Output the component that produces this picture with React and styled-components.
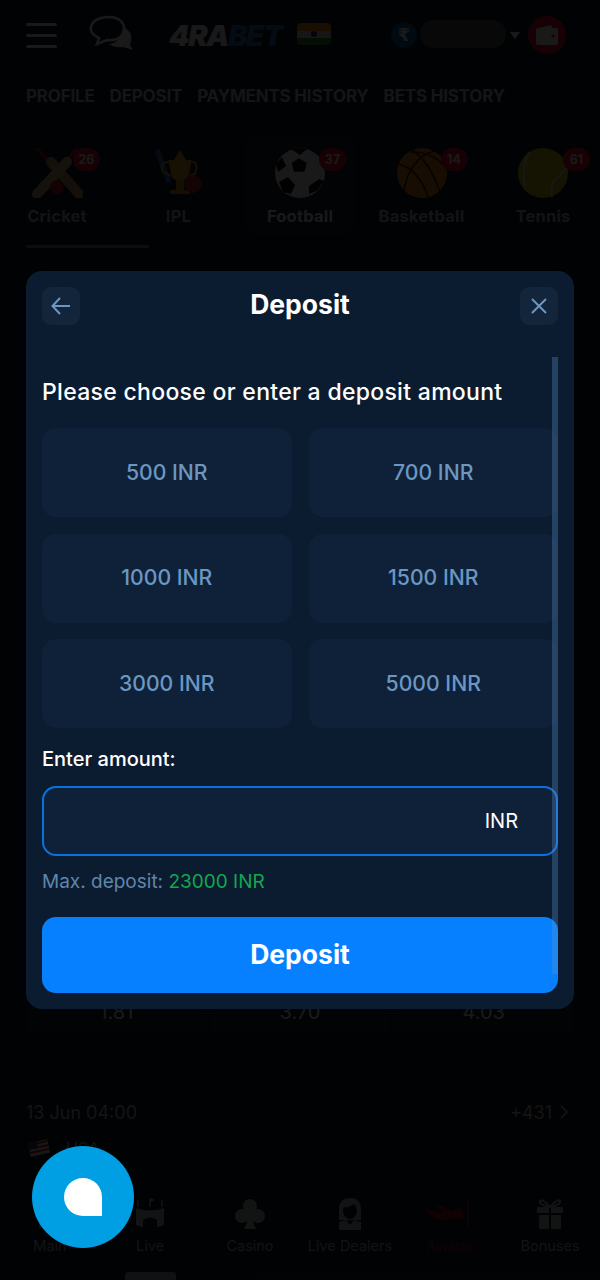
import React from "react";
import styled, { createGlobalStyle } from "styled-components";

const Global = createGlobalStyle`
  html, body { margin: 0; padding: 0; background: #000; }
  * { box-sizing: border-box; }
  body { font-family: Inter, "Noto Sans", sans-serif; }
`;

const Page = styled.div`
  position: relative;
  width: 600px;
  height: 1280px;
  overflow: hidden;
  background: #0a1a2c;
  color: #fff;
`;

/* ---------- background page ---------- */
const Header = styled.header`
  display: flex;
  align-items: center;
  height: 70px;
  padding: 0 32px 0 26px;
`;
const Burger = styled.div`
  display: flex;
  flex-direction: column;
  gap: 8px;
  width: 31px;
  span { height: 3px; background: #fff; border-radius: 2px; }
`;
const ChatGlyph = styled.svg`
  width: 44px;
  height: 36px;
  margin-left: 32px;
  margin-top: -4px;
`;
const Logo = styled.div`
  margin-left: 36px;
  font-size: 29px;
  font-weight: 900;
  font-style: italic;
  letter-spacing: -1.2px;
  width: 128px;
  white-space: nowrap;
`;
const LogoAccent = styled.span`
  color: #2a6fc0;
`;
const Flag = styled.svg`
  width: 34px;
  height: 22px;
  margin-top: -2px;
`;
const Rupee = styled.div`
  display: flex;
  align-items: center;
  justify-content: center;
  width: 26px;
  height: 26px;
  margin-left: 60px;
  margin-top: -1px;
  border-radius: 50%;
  background: #0a5cb0;
  font: 700 18px "DejaVu Sans", sans-serif;
`;
const Balance = styled.div`
  width: 86px;
  height: 28px;
  margin-left: 3px;
  margin-top: -3px;
  border-radius: 14px;
  background: #465046;
`;
const Caret = styled.div`
  width: 0;
  height: 0;
  margin-left: 4px;
  border-left: 5px solid transparent;
  border-right: 5px solid transparent;
  border-top: 7px solid #fff;
`;
const WalletCircle = styled.div`
  display: flex;
  align-items: center;
  justify-content: center;
  width: 38px;
  height: 38px;
  margin-left: 8px;
  border-radius: 50%;
  background: #e8112d;
`;
const Tabs = styled.nav`
  display: flex;
  gap: 15px;
  height: 52px;
  padding: 16px 26px 0;
  font-size: 17px;
  font-weight: 700;
  letter-spacing: -0.2px;
  color: #bcd4ec;
  white-space: nowrap;
`;
const Sports = styled.div`
  display: flex;
  gap: 9.5px;
  padding: 13px 0 0 1px;
  white-space: nowrap;
`;
const Sport = styled.div`
  flex: 0 0 112px;
  display: flex;
  flex-direction: column;
  align-items: center;
  height: 100px;
  padding-top: 13px;
  border-radius: 14px;
  background: ${(p) => (p.$active ? "#101f33" : "transparent")};
  font-size: 16.5px;
  font-weight: 700;
  letter-spacing: 0.2px;
  color: ${(p) => (p.$active ? "#fff" : "#b4c2d2")};
`;
const SportIcon = styled.div`
  position: relative;
  width: 52px;
  height: 50px;
  margin-bottom: 8px;
  svg { display: block; width: 52px; height: 50px; }
`;
const Badge = styled.span`
  position: absolute;
  top: 0;
  left: ${(p) => p.$left}px;
  display: flex;
  align-items: center;
  justify-content: center;
  width: 27px;
  height: 23px;
  border-radius: 12px;
  background: #e8112d;
  font-size: 12.5px;
  font-weight: 700;
  letter-spacing: 0;
  color: #fff;
`;
const ScrollTrack = styled.div`
  width: 123px;
  height: 3px;
  margin: 10px 0 0 26px;
  border-radius: 2px;
  background: #7a8694;
`;
const Match = styled.section`
  display: flex;
  align-items: flex-end;
  height: 786px;
  padding: 0 26px;
`;
const Odds = styled.div`
  display: grid;
  grid-template-columns: repeat(3, 1fr);
  gap: 3px;
  width: 100%;
`;
const Odd = styled.div`
  height: 44px;
  padding-top: 10px;
  border-radius: 6px;
  background: #0f2033;
  text-align: center;
  font-size: 20px;
  color: #fff;
`;
const DateRow = styled.div`
  display: flex;
  align-items: center;
  justify-content: space-between;
  height: 26px;
  margin-top: 65px;
  padding: 0 32px 0 26px;
  font-size: 18px;
  color: #c8c8c8;
`;
const More = styled.span`
  display: flex;
  align-items: center;
  gap: 8px;
`;
const League = styled.div`
  display: flex;
  align-items: center;
  gap: 17px;
  margin-top: 13px;
  padding-left: 29px;
  font-size: 16px;
  color: #c8c8c8;
`;
const LeagueFlag = styled.svg`
  width: 20px;
  height: 14px;
  transform: rotate(-12deg);
`;
const BottomNav = styled.nav`
  position: absolute;
  left: 0;
  right: 0;
  bottom: 0;
  display: grid;
  grid-template-columns: repeat(6, 1fr);
  height: 90px;
  padding-top: 8px;
  background: #0a1a2c;
`;
const NavItem = styled.div`
  position: relative;
  display: flex;
  flex-direction: column;
  align-items: center;
  font-size: 14.5px;
  white-space: nowrap;
  color: ${(p) => (p.$red ? "#b00e24" : "#b4bcc4")};
  svg { display: block; width: 40px; height: 32px; margin-bottom: 7px; overflow: visible; }
`;
const NavMarker = styled.span`
  position: absolute;
  bottom: 0;
  left: 25px;
  width: 51px;
  height: 8px;
  border-radius: 4px 4px 0 0;
  background: #aaa;
`;

/* ---------- dim layer and modal ---------- */
const Dim = styled.div`
  position: absolute;
  inset: 0;
  display: flex;
  align-items: center;
  justify-content: center;
  background: rgba(0, 0, 0, 0.9);
`;
const Modal = styled.div`
  display: flex;
  flex-direction: column;
  width: 548px;
  padding: 16px;
  border-radius: 16px;
  background: #0c1c30;
`;
const ModalHead = styled.div`
  display: flex;
  align-items: center;
  justify-content: space-between;
  height: 38px;
`;
const ModalTitle = styled.h1`
  margin: 0 0 5px;
  font-size: 26.5px;
  font-weight: 700;
`;
const IconButton = styled.button`
  display: flex;
  align-items: center;
  justify-content: center;
  width: 38px;
  height: 38px;
  padding: 0;
  border: 0;
  border-radius: 9px;
  background: #12253b;
`;
const ModalBody = styled.div`
  position: relative;
  margin-top: 32px;
  padding-top: 19px;
`;
const Scrollbar = styled.div`
  position: absolute;
  top: 0;
  right: 0;
  width: 6px;
  height: 617px;
  background: rgba(94, 146, 204, 0.32);
`;
const Heading = styled.h2`
  margin: 0 0 20px;
  font-size: 23px;
  line-height: 32px;
  font-weight: 500;
  letter-spacing: 0.3px;
  white-space: nowrap;
`;
const Amounts = styled.div`
  display: grid;
  grid-template-columns: 1fr 1fr;
  grid-auto-rows: 89px;
  gap: 16.5px 17px;
`;
const Amount = styled.button`
  border: 0;
  padding: 0 0 2px;
  border-radius: 14px;
  background: #0f2139;
  font: 500 21.2px Inter, sans-serif;
  color: #6b97c2;
`;
const Label = styled.div`
  margin-top: 19px;
  font-size: 20px;
  line-height: 24px;
  font-weight: 500;
`;
const Field = styled.div`
  display: flex;
  align-items: center;
  height: 70px;
  margin-top: 15px;
  padding: 0 38px 0 16px;
  border: 2px solid #0a72de;
  border-radius: 14px;
  background: #0f2139;
  font-size: 20px;
`;
const FieldInput = styled.input`
  flex: 1;
  min-width: 0;
  border: 0;
  outline: 0;
  background: transparent;
  color: #fff;
`;
const Limit = styled.div`
  margin-top: 14px;
  font-size: 19px;
  line-height: 24px;
  color: #5f86ad;
`;
const LimitValue = styled.span`
  color: #12a84f;
`;
const Submit = styled.button`
  display: block;
  width: 100%;
  height: 76px;
  margin-top: 23px;
  padding: 0 0 2px;
  border: 0;
  border-radius: 14px;
  background: #0780ff;
  font: 700 26.5px Inter, sans-serif;
  color: #fff;
`;
const ChatWidget = styled.div`
  position: absolute;
  left: 32px;
  top: 1146px;
  display: flex;
  align-items: center;
  justify-content: center;
  width: 102px;
  height: 102px;
  border-radius: 50%;
  background: #009fe3;
`;
const ChatBubble = styled.div`
  width: 38px;
  height: 38px;
  border-radius: 50% 50% 0 50%;
  background: #fff;
`;

/* ---------- drawings ---------- */
const Cricket = () => (
  <svg viewBox="0 0 52 50">
    <g strokeLinecap="round">
      <path d="M6 0 L20 16" stroke="#b81c22" strokeWidth="3" />
      <path d="M20 14 L48 46" stroke="#c89c60" strokeWidth="10" />
      <path d="M46 0 L34 14" stroke="#b81c22" strokeWidth="3" />
      <path d="M36 14 L6 46" stroke="#d8b478" strokeWidth="10" />
    </g>
    <circle cx="26" cy="39" r="7" fill="#b81c22" />
  </svg>
);
const Ipl = () => (
  <svg viewBox="0 0 52 50">
    <path d="M4 2 L16 34" stroke="#2b6fd0" strokeWidth="5" />
    <path d="M15 12 H39 L35 30 Q27 36 19 30Z" fill="#e8ab2c" />
    <path d="M15 14 Q6 14 10 24 L18 28M39 14 Q46 14 42 26 L36 28" fill="none" stroke="#d9a02c" strokeWidth="2" />
    <path d="M27 2 L33 12 H21Z" fill="#e8ab2c" />
    <path d="M23 32 H31 V42 H37 V46 H17 V42 H23Z" fill="#d6981f" />
    <circle cx="40" cy="36" r="9" fill="#c9242c" />
  </svg>
);
const Football = () => (
  <svg viewBox="0 0 52 50">
    <circle cx="26" cy="25" r="25" fill="#fff" />
    <path d="M26 14 L36 20 L33 31 L20 31 L17 20Z" fill="#111" transform="translate(4 -1) scale(.8)" />
    <path d="M5 34 L14 29 L21 37 L17 46 L9 44Z" fill="#111" />
    <path d="M45 31 L50 33 L43 43 L35 46 L35 38Z" fill="#111" />
    <path d="M17 1 L26 0 L33 1 L26 7Z" fill="#111" />
    <path d="M2 16 L8 9 L12 18 L4 24Z" fill="#111" />
  </svg>
);
const Basketball = () => (
  <svg viewBox="0 0 52 50">
    <circle cx="26" cy="25" r="25" fill="#e8871e" />
    <g fill="none" stroke="#3a2208" strokeWidth="1.6">
      <path d="M16 2 Q34 14 44 44" />
      <path d="M2 16 Q22 20 32 49" />
      <path d="M38 3 Q14 10 8 42" />
      <path d="M14 4 Q40 4 51 22" />
    </g>
  </svg>
);
const Tennis = () => (
  <svg viewBox="0 0 52 50">
    <circle cx="26" cy="25" r="25" fill="#cfcb18" />
    <g fill="none" stroke="#e8e8d0" strokeWidth="2">
      <path d="M12 4 Q4 20 8 38" />
      <path d="M50 20 Q44 26 36 34 Q34 40 35 49" />
    </g>
  </svg>
);
const sports = [
  { name: "Cricket", count: 26, Icon: Cricket, badge: 42 },
  { name: "IPL", Icon: Ipl },
  { name: "Football", count: 37, Icon: Football, badge: 45, active: true },
  { name: "Basketball", count: 14, Icon: Basketball, badge: 45 },
  { name: "Tennis", count: 61, Icon: Tennis, badge: 46 },
];

const Home = () => (
  <svg viewBox="0 0 40 32"><path d="M20 2 L36 16 H31 V30 H9 V16 H4Z" fill="currentColor" /></svg>
);
const Stadium = () => (
  <svg viewBox="0 0 40 32" fill="currentColor">
    <path d="M6 10 Q20 15 34 10 V27 Q31 29 27 29 V22 Q20 17 13 22 V29 Q9 29 6 27Z" />
    <path d="M8 2 V9M20 0 V9M32 2 V9" stroke="currentColor" strokeWidth="1.5" />
    <path d="M20 0 L25 2 L20 4Z" />
  </svg>
);
const ClubSuit = () => (
  <svg viewBox="0 0 40 32" fill="currentColor">
    <circle cx="20" cy="8" r="7" />
    <circle cx="12" cy="18" r="7" />
    <circle cx="28" cy="18" r="7" />
    <path d="M18 12 H22 L23 24 L26 31 H14 L17 24Z" />
  </svg>
);
const Dealer = () => (
  <svg viewBox="0 0 40 32" fill="currentColor">
    <path d="M20 0 Q31 0 31 12 V22 H9 V12 Q9 0 20 0Z" />
    <ellipse cx="20" cy="13" rx="7" ry="8" fill="#0a1a2c" />
    <path d="M13 9 Q20 10 25 5 L27 12 Q27 6 20 3 Q13 4 13 9Z" />
    <path d="M9 24 L16 22 L20 27 L24 22 L31 24 V32 H9Z" />
  </svg>
);
const Plane = () => (
  <svg viewBox="0 0 40 32" fill="currentColor">
    <path d="M-5 10 L8 15 L13 14 L6 7 L12 8 L21 14 L27 10 L33 11 L34 20 L8 22 Q0 18 -5 10Z" />
    <path d="M38 0 V30" stroke="currentColor" strokeWidth="1.5" />
  </svg>
);
const Gift = () => (
  <svg viewBox="0 0 40 32" fill="currentColor">
    <path d="M7 9 H19 V15 H7ZM21 9 H33 V15 H21ZM9 17 H19 V31 H9ZM21 17 H31 V31 H21Z" />
    <path d="M20 9 Q12 0 10 3 Q9 7 20 9 Q31 7 30 3 Q28 0 20 9Z" fill="none" stroke="currentColor" strokeWidth="2" />
  </svg>
);
const navItems = [
  { name: "Main", Icon: Home },
  { name: "Live", Icon: Stadium, marker: true },
  { name: "Casino", Icon: ClubSuit },
  { name: "Live Dealers", Icon: Dealer },
  { name: "Aviator", Icon: Plane, red: true },
  { name: "Bonuses", Icon: Gift },
];
const amounts = [500, 700, 1000, 1500, 3000, 5000];

export default function App() {
  return (
    <Page>
      <Global />
      <Header>
        <Burger><span /><span /><span /></Burger>
        <ChatGlyph viewBox="0 0 44 36">
          <path d="M34 12 Q44 16 42 26 L41 30 L44 35 L34 32 Q26 33 20 29 Q32 28 34 12Z" fill="#fff" />
          <path d="M20 2 C30 2 36 8 35 15 C34 23 26 26 18 25 L8 29 L10 23 C4 20 1 16 2 12 C3 6 10 2 20 2Z" fill="none" stroke="#fff" strokeWidth="2.6" />
        </ChatGlyph>
        <Logo>4RA<LogoAccent>BET</LogoAccent></Logo>
        <Flag viewBox="0 0 34 22">
          <defs><clipPath id="flagClip"><rect width="34" height="22" rx="4" /></clipPath></defs>
          <g clipPath="url(#flagClip)">
            <rect width="34" height="8" fill="#f59a1c" />
            <rect y="8" width="34" height="7" fill="#ddd" />
            <rect y="15" width="34" height="7" fill="#2d8a2d" />
            <circle cx="17" cy="11" r="3" fill="#12307a" />
          </g>
        </Flag>
        <Rupee>₹</Rupee>
        <Balance />
        <Caret />
        <WalletCircle>
          <svg width="22" height="20" viewBox="0 0 22 20">
            <path d="M3 3 L15 0 L16 3Z" fill="#fff" />
            <path d="M2 3 H20 Q22 3 22 5 V18 Q22 20 20 20 H2 Q0 20 0 18 V5 Q0 3 2 3Z" fill="#fff" />
            <circle cx="17" cy="11" r="1.6" fill="#e8112d" />
          </svg>
        </WalletCircle>
      </Header>
      <Tabs>
        <span>PROFILE</span>
        <span>DEPOSIT</span>
        <span>PAYMENTS HISTORY</span>
        <span>BETS HISTORY</span>
      </Tabs>
      <Sports>
        {sports.map(({ name, count, Icon, badge, active }) => (
          <Sport key={name} $active={active}>
            <SportIcon>
              <Icon />
              {count && <Badge $left={badge}>{count}</Badge>}
            </SportIcon>
            {name}
          </Sport>
        ))}
      </Sports>
      <ScrollTrack />
      <Match>
        <Odds>
          <Odd>1.81</Odd>
          <Odd>3.70</Odd>
          <Odd>4.03</Odd>
        </Odds>
      </Match>
      <DateRow>
        <span>13 Jun 04:00</span>
        <More>
          +431
          <svg width="8" height="14" viewBox="0 0 8 14" fill="none" stroke="currentColor" strokeWidth="1.6">
            <path d="M1 1 L7 7 L1 13" />
          </svg>
        </More>
      </DateRow>
      <League>
        <LeagueFlag viewBox="0 0 20 14">
          <rect width="20" height="14" fill="#e8e8e8" />
          <path d="M0 2 H20M0 6 H20M0 10 H20" stroke="#d02030" strokeWidth="2" />
          <rect width="9" height="7" fill="#2a3a80" />
        </LeagueFlag>
        USA
      </League>
      <BottomNav>
        {navItems.map(({ name, Icon, red, marker }) => (
          <NavItem key={name} $red={red}>
            <Icon />
            {name}
            {marker && <NavMarker />}
          </NavItem>
        ))}
      </BottomNav>
      <Dim>
        <Modal>
          <ModalHead>
            <IconButton aria-label="Back">
              <svg width="20" height="18" viewBox="0 0 20 18" fill="none" stroke="#6b97c2" strokeWidth="2">
                <path d="M19 9 H1.5M9 1 L1.5 9 L9 17" />
              </svg>
            </IconButton>
            <ModalTitle>Deposit</ModalTitle>
            <IconButton aria-label="Close">
              <svg width="18" height="18" viewBox="0 0 18 18" fill="none" stroke="#6b97c2" strokeWidth="2">
                <path d="M2 2 L16 16M16 2 L2 16" />
              </svg>
            </IconButton>
          </ModalHead>
          <ModalBody>
            <Heading>Please choose or enter a deposit amount</Heading>
            <Amounts>
              {amounts.map((a) => (
                <Amount key={a}>{a} INR</Amount>
              ))}
            </Amounts>
            <Label>Enter amount:</Label>
            <Field>
              <FieldInput aria-label="Amount" />
              INR
            </Field>
            <Limit>Max. deposit: <LimitValue>23000 INR</LimitValue></Limit>
            <Submit>Deposit</Submit>
            <Scrollbar />
          </ModalBody>
        </Modal>
      </Dim>
      <ChatWidget><ChatBubble /></ChatWidget>
    </Page>
  );
}
